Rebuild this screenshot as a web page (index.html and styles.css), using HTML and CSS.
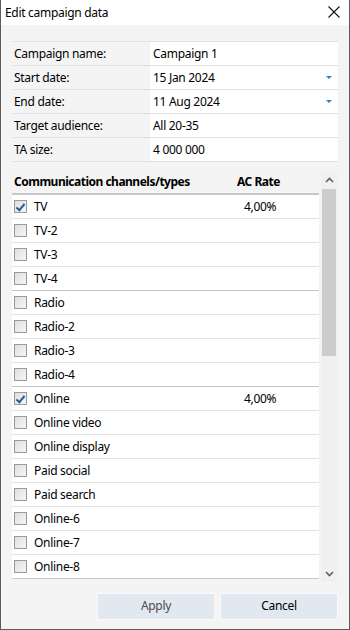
FILE: index.html
```html
<!DOCTYPE html>
<html>
<head>
<meta charset="utf-8">
<link rel="stylesheet" href="styles.css">
</head>
<body>
<div class="window">
  <div class="titlebar">
    <span class="title">Edit campaign data</span>
    <svg class="close" width="12" height="12" viewBox="0 0 12 12"><path d="M0.5 0.5 L11.5 11.5 M11.5 0.5 L0.5 11.5" stroke="#111" stroke-width="1.1" fill="none"/></svg>
  </div>
  <div class="content">
    <div class="form">
      <div class="frow"><div class="flabel">Campaign name:</div><div class="fvalue">Campaign 1</div></div>
      <div class="frow"><div class="flabel">Start date:</div><div class="fvalue">15 Jan 2024<span class="dd"></span></div></div>
      <div class="frow"><div class="flabel">End date:</div><div class="fvalue">11 Aug 2024<span class="dd"></span></div></div>
      <div class="frow"><div class="flabel">Target audience:</div><div class="fvalue">All 20-35</div></div>
      <div class="frow"><div class="flabel">TA size:</div><div class="fvalue">4 000 000</div></div>
    </div>
    <div class="channels">
      <div class="list">
        <div class="lhead"><span class="hname">Communication channels/types</span><span class="hrate">AC Rate</span></div>
        <div class="rows">
          <div class="row"><span class="cb checked"></span><span class="name">TV</span><span class="rate">4,00%</span></div>
          <div class="row"><span class="cb"></span><span class="name">TV-2</span></div>
          <div class="row"><span class="cb"></span><span class="name">TV-3</span></div>
          <div class="row group-end"><span class="cb"></span><span class="name">TV-4</span></div>
          <div class="row"><span class="cb"></span><span class="name">Radio</span></div>
          <div class="row"><span class="cb"></span><span class="name">Radio-2</span></div>
          <div class="row"><span class="cb"></span><span class="name">Radio-3</span></div>
          <div class="row group-end"><span class="cb"></span><span class="name">Radio-4</span></div>
          <div class="row"><span class="cb checked"></span><span class="name">Online</span><span class="rate">4,00%</span></div>
          <div class="row"><span class="cb"></span><span class="name">Online video</span></div>
          <div class="row"><span class="cb"></span><span class="name">Online display</span></div>
          <div class="row"><span class="cb"></span><span class="name">Paid social</span></div>
          <div class="row"><span class="cb"></span><span class="name">Paid search</span></div>
          <div class="row"><span class="cb"></span><span class="name">Online-6</span></div>
          <div class="row"><span class="cb"></span><span class="name">Online-7</span></div>
          <div class="row last"><span class="cb"></span><span class="name">Online-8</span></div>
        </div>
      </div>
      <div class="scrollbar">
        <div class="sbtn"><svg width="9" height="6" viewBox="0 0 9 6"><path d="M1 5 L4.5 1.5 L8 5" stroke="#606060" stroke-width="1.6" fill="none"/></svg></div>
        <div class="track"><div class="thumb"></div></div>
        <div class="sbtn"><svg width="9" height="6" viewBox="0 0 9 6"><path d="M1 1 L4.5 4.5 L8 1" stroke="#606060" stroke-width="1.6" fill="none"/></svg></div>
      </div>
    </div>
    <div class="buttons">
      <button class="btn apply">Apply</button>
      <button class="btn">Cancel</button>
    </div>
  </div>
</div>
</body>
</html>
```

FILE: styles.css
```css
* { box-sizing: border-box; }
html, body { margin: 0; padding: 0; background: #f4f4f4; }
body {
  font-family: "Noto Sans", "Open Sans", "DejaVu Sans", sans-serif;
  font-size: 12px;
  color: #000;
}
.window {
  width: 350px;
  height: 630px;
  border: 1px solid #5c5c5c;
  border-top: none;
  background: #f4f4f4;
  display: flex;
  flex-direction: column;
}
.titlebar {
  height: 25px;
  background: #fff;
  display: flex;
  align-items: center;
  justify-content: space-between;
  padding: 0 9px 1px 4px;
}
.title { font-size: 12px; letter-spacing: -0.3px; }
.close { display: block; }
.content {
  flex: 1;
  padding: 16px 11px 0 11px;
  display: flex;
  flex-direction: column;
}
.form {
  border-top: 1px solid #e3e3e3;
  width: 326px;
}
.frow {
  display: flex;
  height: 24px;
  border-bottom: 1px solid #e0e0e0;
}
.flabel {
  width: 138px;
  padding-left: 2px;
  display: flex;
  align-items: center;
  letter-spacing: -0.3px;
}
.fvalue {
  flex: 1;
  background: #fff;
  display: flex;
  align-items: center;
  padding-left: 3px;
  position: relative;
  letter-spacing: -0.3px;
}
.dd {
  position: absolute;
  right: 6px;
  top: 10px;
  width: 0; height: 0;
  border-left: 3px solid transparent;
  border-right: 3px solid transparent;
  border-top: 3px solid #3a7fb8;
}
.channels {
  margin-top: 9px;
  display: flex;
  gap: 2px;
  height: 411px;
}
.list {
  width: 307px;
  display: flex;
  flex-direction: column;
}
.lhead {
  height: 24px;
  flex-shrink: 0;
  display: flex;
  align-items: center;
  font-weight: bold;
  border-bottom: 2px solid #c8c8c8;
  padding-bottom: 1px;
  letter-spacing: -0.5px;
}
.hname { padding-left: 2px; width: 225px; }
.rows { background: #fff; }
.row {
  height: 24px;
  display: flex;
  align-items: center;
  border-bottom: 1px solid #e2e2e2;
  letter-spacing: -0.3px;
}
.row.group-end { border-bottom: 1px solid #c4c4c4; }
.row.last { border-bottom: 1px solid #c8c8c8; }
.cb {
  width: 13px; height: 13px;
  margin-left: 2px;
  border: 1px solid #9a9a9a;
  background: linear-gradient(135deg, #dedede, #f7f7f7);
  position: relative;
  flex-shrink: 0;
}
.cb.checked::after {
  content: "";
  position: absolute;
  left: 3px; top: 1px;
  width: 3px; height: 7px;
  border: solid #2b5c9a;
  border-width: 0 2px 2px 0;
  transform: rotate(40deg);
}
.name { margin-left: 7px; width: 210px; }
.scrollbar {
  width: 16px;
  background: #f0f0f0;
  display: flex;
  flex-direction: column;
}
.sbtn {
  height: 17px;
  display: flex;
  align-items: center;
  justify-content: center;
}
.track { flex: 1; }
.thumb {
  margin: 1px 1px 0 1px;
  height: 167px;
  background: #cdcdcd;
}
.buttons {
  margin-top: 11px;
  display: flex;
  justify-content: flex-end;
  gap: 5px;
}
.btn {
  width: 118px;
  height: 27px;
  border: 1px solid #fafafa;
  background: #e1e8f0;
  font-family: inherit;
  font-size: 12px;
  letter-spacing: -0.3px;
  color: #000;
  padding: 0 0 2px 0;
}
.btn.apply { color: #4e4e4e; }
```
